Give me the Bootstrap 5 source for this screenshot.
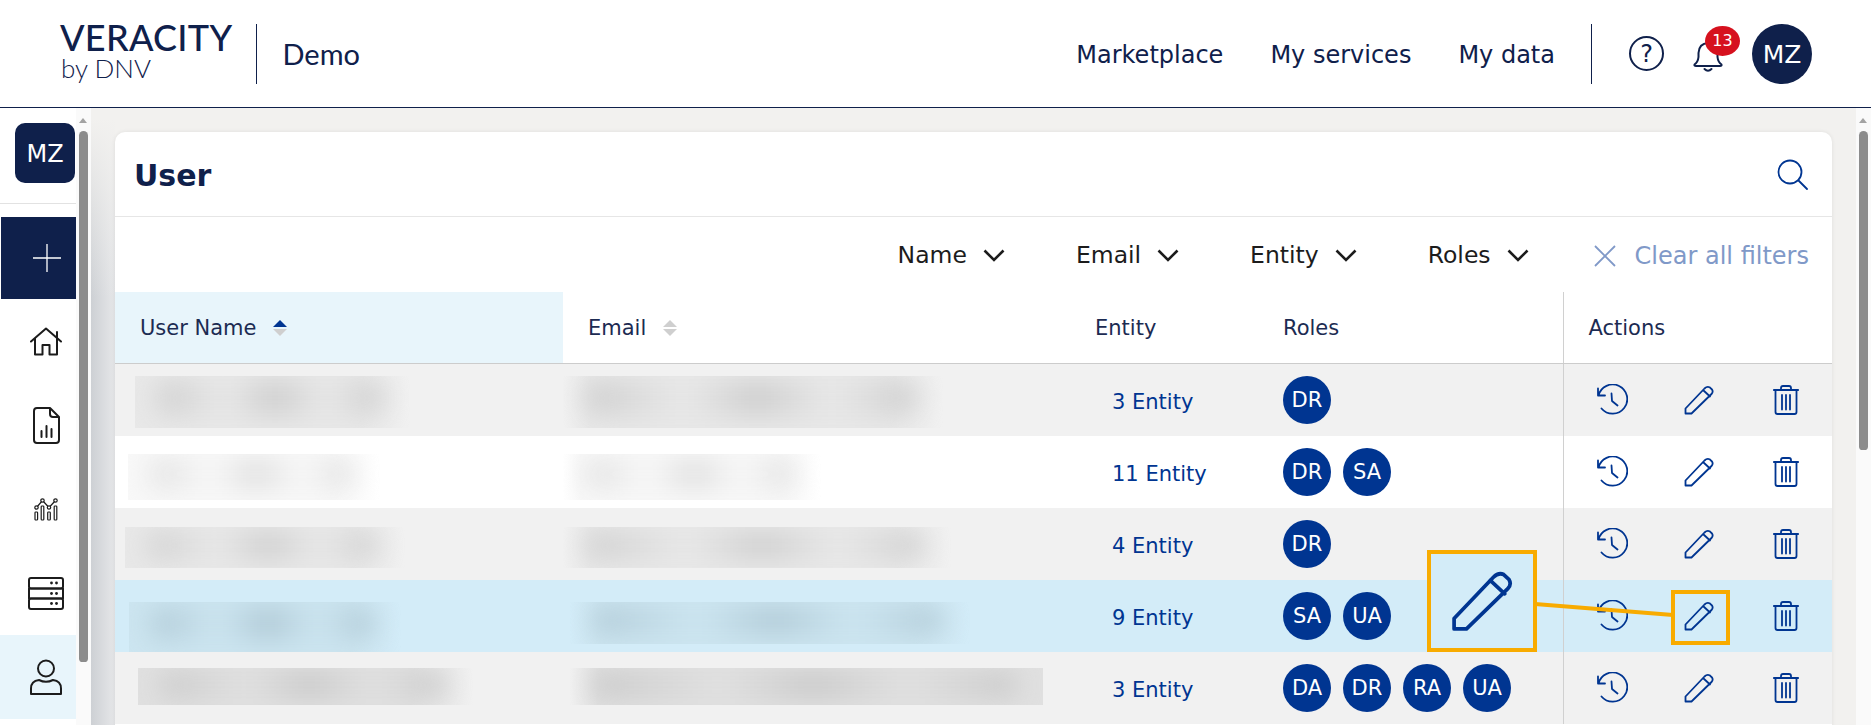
<!DOCTYPE html>
<html lang="en">

<head>
    <meta charset="UTF-8">
    <meta name="viewport" content="width=device-width, initial-scale=1.0">
    <title>Veracity Demo - User</title>
    <link href="https://cdn.jsdelivr.net/npm/bootstrap@5.3.2/dist/css/bootstrap.min.css" rel="stylesheet">
    <style>
        body {
            height: 725px;
            overflow: hidden;
            position: relative;
            font-family: "DejaVu Sans", sans-serif;
            color: #0f204b;
            background: #fff;
        }

        /* header */
        .top-bar {
            height: 108px;
            border-bottom: 1px solid #0f204b;
            padding: 0 59px 0 60px;
        }

        .brand-block {
            margin-bottom: 8px;
        }

        .brand-name {
            font-family: Lato, sans-serif;
            font-size: 36px;
            line-height: 36px;
            font-weight: 500;
            letter-spacing: .3px;
        }

        .brand-sub {
            font-family: Lato, sans-serif;
            font-size: 26px;
            line-height: 26px;
            font-weight: 300;
            margin-left: 1px;
        }

        .top-rule {
            width: 1px;
            height: 60px;
            background: #0f204b;
        }

        .brand-rule {
            margin: 0 25px 0 24px;
        }

        .app-name {
            font-family: Lato, sans-serif;
            font-size: 29px;
        }

        .top-link {
            font-size: 24px;
            padding-top: 2px;
            color: #0f204b;
            text-decoration: none;
            margin-right: 47px;
        }

        .top-link-last {
            margin-right: 36px;
        }

        .help-ring {
            width: 35px;
            height: 35px;
            border: 2.5px solid #0f204b;
            border-radius: 50%;
            margin-left: 37px;
            margin-right: 29px;
            font-size: 24px;
            line-height: 1;
        }

        .bell-wrap {
            width: 30px;
            height: 32px;
            margin-right: 29px;
            margin-top: 4px;
        }

        .bell-count {
            position: absolute;
            left: 12px;
            top: -14px;
            width: 35px;
            height: 30px;
            border-radius: 50%;
            background: #d6111e;
            color: #fff;
            font-size: 16px;
        }

        .me-circle {
            width: 60px;
            height: 60px;
            padding-top: 2px;
            border-radius: 50%;
            background: #0f204b;
            color: #fff;
            font-size: 25px;
        }

        /* side menu */
        .app-body {
            height: 617px;
        }

        .side-menu {
            width: 76px;
            flex: none;
        }

        .me-tile {
            width: 60px;
            height: 60px;
            padding-top: 2px;
            margin: 15px 0 0 15px;
            border-radius: 10px;
            background: #0f204b;
            color: #fff;
            font-size: 24px;
        }

        .side-rule {
            height: 1px;
            margin-top: 20px;
            background: #e2e2e2;
        }

        .side-item {
            height: 84px;
            padding-left: 16px;
        }

        .side-add {
            height: 82px;
            margin: 13px 0 0 1px;
            padding-left: 16px;
            background: #0f204b;
        }

        .side-active {
            height: 84px;
            padding-left: 16px;
            background: #e8f5fb;
        }

        .fake-scroll {
            width: 15px;
            flex: none;
            background: #fafafa;
            position: relative;
        }

        .fake-arrow {
            position: absolute;
            top: 10px;
            left: 3px;
            border: 4.5px solid transparent;
            border-top: 0;
            border-bottom: 5px solid #a3a3a3;
        }

        .fake-thumb {
            position: absolute;
            top: 23px;
            left: 3px;
            width: 9px;
            border-radius: 5px 5px 4px 4px;
            background: #8c8c8c;
        }

        .thumb-side {
            height: 531px;
        }

        .thumb-main {
            height: 319px;
        }

        /* main area */
        .main-area {
            flex: 1;
            min-width: 0;
            padding: 24px 24px 0;
            background:
                linear-gradient(180deg, #f2f1ef 10px, rgba(242, 241, 239, 0) 190px),
                linear-gradient(90deg, #cdd0d4, #e6e7e9) 0 0 / 24px 100% no-repeat,
                #f2f1ef;
        }

        .user-card {
            border: 0;
            border-radius: 10px 10px 0 0;
            height: 600px;
            overflow: hidden;
            box-shadow: 0 0 4px rgba(0, 0, 0, .08);
        }

        .card-head {
            height: 85px;
            padding: 0 24px 0 19px;
            border-bottom: 1px solid #e6e6e6;
        }

        .card-name {
            font-size: 30px;
            font-weight: 700;
            margin: 0;
            padding-top: 3px;
        }

        .filter-bar {
            height: 75px;
            padding: 2px 23px 0 24px;
            color: #1c1c1c;
            font-size: 23.5px;
        }

        .filter-item {
            gap: 16px;
            margin-right: 71px;
        }

        .filter-last {
            margin-right: 65px;
        }

        .filter-clear {
            gap: 19px;
            color: #8099c8;
            font-size: 24px;
        }

        /* table */
        .user-table {
            table-layout: fixed;
            width: 1718px;
            margin: 0;
            font-size: 21px;
            color: #0f204b;
        }

        .user-table th {
            height: 71px;
            padding: 2px 0 0 25px;
            font-weight: 400;
            vertical-align: middle;
            border-bottom: 1px solid #ccc;
            color: #1c2b52;
        }

        .user-table td {
            height: 72px;
            padding: 0;
            border: 0;
            vertical-align: top;
        }

        .th-sorted {
            --bs-table-bg: #e8f5fb;
        }

        .sort-arrows {
            margin-left: 10px;
            vertical-align: -2px;
        }

        .user-table .cell-actions {
            border-left: 1px solid #d0d0d0;
        }

        .row-grey {
            --row-tint: #e8e8e8;
            --row-ink: #cdcdcd;
        }

        .row-grey>td {
            --bs-table-bg: #f1f1f1;
        }

        .row-white {
            --row-tint: #f8f8f8;
            --row-ink: #dedede;
        }

        .row-picked {
            --row-tint: #cce5f0;
            --row-ink: #b0c9d5;
        }

        .row-picked>td {
            --bs-table-bg: #d3ecf8;
        }

        .row-dark {
            --row-tint: #e0e0e0;
            --row-ink: #c6c6c6;
        }

        .row-dark>td {
            --bs-table-bg: #f1f1f1;
        }

        /* blurred out names and mails */
        .blur-box {
            display: block;
            overflow: hidden;
            background: linear-gradient(90deg, var(--row-tint) 82%, transparent);
        }

        .blur-ink {
            display: block;
            height: 66%;
            margin: 5px 26px 0 22px;
            border-radius: 14px;
            background: linear-gradient(90deg, var(--row-ink), var(--row-tint) 30%, var(--row-ink) 52%, var(--row-tint) 74%, var(--row-ink));
            filter: blur(13px);
        }

        .mail-box {
            background: linear-gradient(90deg, transparent, var(--row-tint) 7%, var(--row-tint) 86%, transparent);
        }

        .name-1 { width: 275px; height: 52px; margin: 12px 0 0 20px; }
        .name-2 { width: 252px; height: 46px; margin: 18px 0 0 13px; }
        .name-3 { width: 280px; height: 41px; margin: 19px 0 0 10px; }
        .name-4 { width: 272px; height: 50px; margin: 22px 0 0 14px; }
        .name-5 { width: 335px; height: 37px; margin: 16px 0 0 23px; }
        .mail-1 { width: 380px; height: 52px; margin-top: 12px; }
        .mail-2 { width: 258px; height: 46px; margin-top: 18px; }
        .mail-3 { width: 388px; height: 41px; margin-top: 19px; }
        .mail-4 { width: 400px; height: 42px; margin: 22px 0 0 7px; }
        .mail-5 { width: 473px; height: 37px; margin: 16px 0 0 7px; }

        .mail-5 {
            background: linear-gradient(90deg, transparent, var(--row-tint) 6%);
        }

        .entity-link {
            color: #003591;
            text-decoration: none;
            display: block;
            padding: 23px 0 0 42px;
            line-height: 30px;
        }

        .role-list {
            gap: 12px;
            padding: 12px 0 0 25px;
        }

        .role-dot {
            width: 48px;
            height: 48px;
            padding-top: 3px;
            border-radius: 50%;
            background: #003591;
            color: #fff;
            font-size: 21px;
        }

        .action-list {
            height: 72px;
            padding-left: 33px;
        }

        .action-history { margin-right: 56px; }
        .action-pencil { margin-right: 59px; }

        .icon-line {
            fill: none;
            stroke: #003591;
            stroke-width: 1.8;
            stroke-linecap: round;
            stroke-linejoin: round;
        }

        .side-line {
            fill: none;
            stroke: #1c1c1c;
            stroke-width: 2;
            stroke-linecap: round;
            stroke-linejoin: round;
        }

        /* orange call-out drawn over the table */
        .note-line {
            position: absolute;
            left: 1530px;
            top: 595px;
        }

        .note-small {
            position: absolute;
            left: 1671px;
            top: 590px;
            width: 59px;
            height: 55px;
            border: 4.5px solid #f8ab00;
        }

        .note-big {
            position: absolute;
            left: 1427px;
            top: 550px;
            width: 110px;
            height: 102px;
            border: 4.5px solid #f8ab00;
            background: #d3ecf8;
        }
    </style>
</head>

<body>
    <header class="top-bar d-flex align-items-center">
        <div class="brand-block">
            <div class="brand-name">VERACITY</div>
            <div class="brand-sub">by DNV</div>
        </div>
        <div class="top-rule brand-rule"></div>
        <div class="app-name">Demo</div>

        <nav class="d-flex align-items-center ms-auto">
            <a class="top-link" href="#">Marketplace</a>
            <a class="top-link" href="#">My services</a>
            <a class="top-link top-link-last" href="#">My data</a>
        </nav>
        <div class="top-rule"></div>
        <div class="help-ring d-flex align-items-center justify-content-center">?</div>
        <div class="bell-wrap position-relative">
            <svg width="30" height="32" viewBox="0 0 30 32">
                <path d="M1.5 24.5 Q5 22 5.5 17 V13 Q6 3.5 15 3 Q24 3.5 24.5 13 V17 Q25 22 28.5 24.5 Q29 26 27 26 H3 Q1 26 1.5 24.5 Z" fill="none" stroke="#0f204b" stroke-width="2" />
                <path d="M11.5 29 Q15 32.5 18.5 29" fill="none" stroke="#0f204b" stroke-width="2" stroke-linecap="round" />
            </svg>
            <span class="bell-count d-flex align-items-center justify-content-center">13</span>
        </div>
        <div class="me-circle d-flex align-items-center justify-content-center">MZ</div>
    </header>

    <div class="app-body d-flex">
        <aside class="side-menu">
            <div class="me-tile d-flex align-items-center justify-content-center">MZ</div>
            <div class="side-rule"></div>
            <div class="side-add d-flex align-items-center justify-content-center">
                <svg width="28" height="28" viewBox="0 0 28 28">
                    <path d="M14 0 V28 M0 14 H28" stroke="#fff" stroke-width="1.3" />
                </svg>
            </div>
            <div class="side-item d-flex align-items-center justify-content-center">
                <svg width="32" height="29" viewBox="0 0 32 29">
                    <path class="side-line" d="M1 14.5 L16 1.5 L31 14.5 M5 11.5 V27.5 H12.5 V18 H19.5 V27.5 H27 V5" />
                </svg>
            </div>
            <div class="side-item d-flex align-items-center justify-content-center">
                <svg width="27" height="37" viewBox="0 0 27 37">
                    <path class="side-line" d="M4 1 H17 L26 10 V33 Q26 36 23 36 H4 Q1 36 1 33 V4 Q1 1 4 1 Z M17 1 V7 Q17 10 20 10 H26" />
                    <path class="side-line" d="M8.5 24 V30 M13.5 19 V30 M18.5 22 V30" stroke-width="2.4" />
                </svg>
            </div>
            <div class="side-item d-flex align-items-center justify-content-center">
                <svg width="24" height="23" viewBox="0 0 24 23">
                    <path d="M2.5 9.5 L8.5 2.5 L15 9.5 L21.5 2.5" fill="none" stroke="#1c1c1c" stroke-width="1.2" />
                    <g fill="#fff" stroke="#1c1c1c" stroke-width="1.2">
                        <circle cx="2.5" cy="9.5" r="1.7" />
                        <circle cx="8.5" cy="2.5" r="1.7" />
                        <circle cx="15" cy="9.5" r="1.7" />
                        <circle cx="21.5" cy="2.5" r="1.7" />
                        <rect x="1" y="14" width="2.6" height="8" rx=".8" />
                        <rect x="7.2" y="8" width="2.6" height="14" rx=".8" />
                        <rect x="13.7" y="14" width="2.6" height="8" rx=".8" />
                        <rect x="20.2" y="8" width="2.6" height="14" rx=".8" />
                    </g>
                </svg>
            </div>
            <div class="side-item d-flex align-items-center justify-content-center">
                <svg width="36" height="33" viewBox="0 0 36 33">
                    <g class="side-line">
                        <rect x="1" y="1" width="34" height="10.5" rx="2" />
                        <rect x="1" y="11.5" width="34" height="10" rx="0" />
                        <rect x="1" y="21.5" width="34" height="10.5" rx="2" />
                    </g>
                    <g fill="#1c1c1c">
                        <circle cx="23.5" cy="6" r="1.4" />
                        <circle cx="28.5" cy="6" r="1.4" />
                        <circle cx="23.5" cy="16.5" r="1.4" />
                        <circle cx="28.5" cy="16.5" r="1.4" />
                        <circle cx="23.5" cy="26.5" r="1.4" />
                        <circle cx="28.5" cy="26.5" r="1.4" />
                    </g>
                </svg>
            </div>
            <div class="side-active d-flex align-items-center justify-content-center">
                <svg width="32" height="36" viewBox="0 0 32 36">
                    <circle class="side-line" cx="16" cy="9.5" r="8" />
                    <path class="side-line" d="M1 35 V29.5 Q1 22 9 21 Q16 24.5 23 21 Q31 22 31 29.5 V35 Z" />
                </svg>
            </div>
        </aside>
        <div class="fake-scroll">
            <span class="fake-arrow"></span>
            <span class="fake-thumb thumb-side"></span>
        </div>

        <main class="main-area">
            <div class="card user-card">
                <div class="card-head d-flex align-items-center justify-content-between">
                    <h1 class="card-name">User</h1>
                    <svg width="31" height="31" viewBox="0 0 31 31">
                        <circle class="icon-line" cx="13" cy="13" r="11.5" />
                        <path class="icon-line" d="M21.5 21.5 L30 30" />
                    </svg>
                </div>

                <div class="filter-bar d-flex align-items-center justify-content-end">
                    <div class="filter-item d-flex align-items-center">Name
                        <svg width="22" height="13" viewBox="0 0 22 13"><path d="M1.5 1.5 L11 11 L20.5 1.5" fill="none" stroke="#1c1c1c" stroke-width="2.6" /></svg>
                    </div>
                    <div class="filter-item d-flex align-items-center">Email
                        <svg width="22" height="13" viewBox="0 0 22 13"><path d="M1.5 1.5 L11 11 L20.5 1.5" fill="none" stroke="#1c1c1c" stroke-width="2.6" /></svg>
                    </div>
                    <div class="filter-item d-flex align-items-center">Entity
                        <svg width="22" height="13" viewBox="0 0 22 13"><path d="M1.5 1.5 L11 11 L20.5 1.5" fill="none" stroke="#1c1c1c" stroke-width="2.6" /></svg>
                    </div>
                    <div class="filter-item filter-last d-flex align-items-center">Roles
                        <svg width="22" height="13" viewBox="0 0 22 13"><path d="M1.5 1.5 L11 11 L20.5 1.5" fill="none" stroke="#1c1c1c" stroke-width="2.6" /></svg>
                    </div>
                    <div class="filter-clear d-flex align-items-center">
                        <svg width="22" height="22" viewBox="0 0 22 22"><path d="M1 1 L21 21 M21 1 L1 21" stroke="#8099c8" stroke-width="1.8" /></svg>
                        Clear all filters
                    </div>
                </div>

                <table class="table user-table">
                    <colgroup>
                        <col style="width:448px">
                        <col style="width:507px">
                        <col style="width:188px">
                        <col style="width:305px">
                        <col style="width:270px">
                    </colgroup>
                    <thead>
                        <tr>
                            <th class="th-sorted">User Name
                                <svg class="sort-arrows" width="14" height="18" viewBox="0 0 14 18">
                                    <path d="M0 8 L7 1 L14 8 Z" fill="#003591" />
                                    <path d="M0 10 L14 10 L7 17 Z" fill="#cfcfcf" />
                                </svg>
                            </th>
                            <th>Email
                                <svg class="sort-arrows" width="14" height="18" viewBox="0 0 14 18">
                                    <path d="M0 8 L7 1 L14 8 Z" fill="#cfcfcf" />
                                    <path d="M0 10 L14 10 L7 17 Z" fill="#cfcfcf" />
                                </svg>
                            </th>
                            <th>Entity</th>
                            <th>Roles</th>
                            <th class="cell-actions">Actions</th>
                        </tr>
                    </thead>
                    <tbody id="userRows"></tbody>
                </table>
            </div>
        </main>
        <div class="fake-scroll">
            <span class="fake-arrow"></span>
            <span class="fake-thumb thumb-main"></span>
        </div>
    </div>

    <!-- call-out -->
    <svg class="note-line" width="145" height="25" viewBox="0 0 145 25">
        <path d="M5 9 L143 20" stroke="#f8ab00" stroke-width="4" />
    </svg>
    <div class="note-small"></div>
    <div class="note-big d-flex align-items-center justify-content-center">
        <svg width="62" height="62" viewBox="0 0 30 30">
            <path class="icon-line" d="M1.5 28.5 V23.5 L20.5 3.5 Q23 1 25.5 2.2 L28 4.5 Q29.5 7 27.5 9 L7.5 28.5 Z M19 5 L26 11.5" />
        </svg>
    </div>

    <script>
        // rows of the table, names are blurred in the picture
        const users = [
            { rowClass: 'row-grey', name: 'name-1', mail: 'mail-1', entity: '3 Entity', roles: ['DR'] },
            { rowClass: 'row-white', name: 'name-2', mail: 'mail-2', entity: '11 Entity', roles: ['DR', 'SA'] },
            { rowClass: 'row-grey', name: 'name-3', mail: 'mail-3', entity: '4 Entity', roles: ['DR'] },
            { rowClass: 'row-picked', name: 'name-4', mail: 'mail-4', entity: '9 Entity', roles: ['SA', 'UA'] },
            { rowClass: 'row-dark', name: 'name-5', mail: 'mail-5', entity: '3 Entity', roles: ['DA', 'DR', 'RA', 'UA'] }
        ];

        const actionIcons = `
            <div class="action-list d-flex align-items-center">
                <svg class="action-history" width="31" height="31" viewBox="0 0 31 31">
                    <path class="icon-line" d="M1.5 11.5 A14.6 14.6 0 1 1 4.5 24.5 M1 4.5 V11.5 H8 M14.5 9.5 L15 17 L20.5 21.5" />
                </svg>
                <svg class="action-pencil" width="30" height="30" viewBox="0 0 30 30">
                    <path class="icon-line" d="M1.5 28.5 V23.5 L20.5 3.5 Q23 1 25.5 2.2 L28 4.5 Q29.5 7 27.5 9 L7.5 28.5 Z M19 5 L26 11.5" />
                </svg>
                <svg width="26" height="30" viewBox="0 0 26 30">
                    <path class="icon-line" d="M.8 5 H25.2 M8 5 V3 Q8 1 10 1 H16 Q18 1 18 3 V5 M2.5 5 V27 Q2.5 29 4.5 29 H21.5 Q23.5 29 23.5 27 V5 M9 10 V24.5 M13 10 V24.5 M17 10 V24.5" />
                </svg>
            </div>`;

        document.getElementById('userRows').innerHTML = users.map(user => `
            <tr class="${user.rowClass}">
                <td><span class="blur-box ${user.name}"><span class="blur-ink"></span></span></td>
                <td><span class="blur-box mail-box ${user.mail}"><span class="blur-ink"></span></span></td>
                <td><a class="entity-link" href="#">${user.entity}</a></td>
                <td><div class="role-list d-flex">${user.roles.map(role =>
                    `<span class="role-dot d-flex align-items-center justify-content-center">${role}</span>`).join('')}</div></td>
                <td class="cell-actions">${actionIcons}</td>
            </tr>`).join('');
    </script>
    <script src="https://cdn.jsdelivr.net/npm/bootstrap@5.3.2/dist/js/bootstrap.bundle.min.js"></script>
</body>

</html>
